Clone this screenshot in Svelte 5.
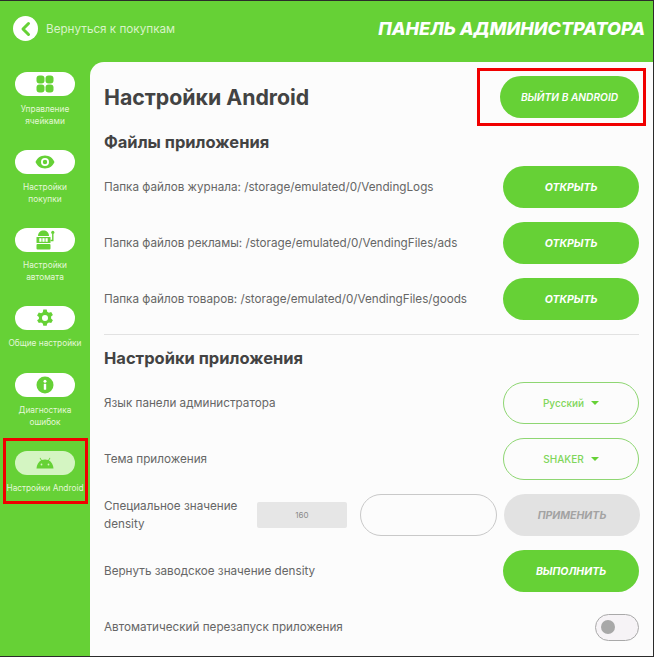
<script lang="ts">
  const fileRows = [
    "Папка файлов журнала: /storage/emulated/0/VendingLogs",
    "Папка файлов рекламы: /storage/emulated/0/VendingFiles/ads",
    "Папка файлов товаров: /storage/emulated/0/VendingFiles/goods",
  ];
  const navItems = [
    { icon: "grid", label: ["Управление", "ячейками"] },
    { icon: "eye", label: ["Настройки", "покупки"] },
    { icon: "slot", label: ["Настройки", "автомата"] },
    { icon: "gear", label: ["Общие настройки"] },
    { icon: "info", label: ["Диагностика", "ошибок"] },
    { icon: "android", label: ["Настройки Android"], active: true },
  ];
</script>

<div class="screen">
  <header class="top">
    <div class="back">
      <span class="back-dot">
        <svg width="14" height="16" viewBox="0 0 14 16"><path d="M9.5 2.5 L4 8 L9.5 13.5" fill="none" stroke="#66d136" stroke-width="3" stroke-linecap="round" stroke-linejoin="round" /></svg>
      </span>
      <span>Вернуться к покупкам</span>
    </div>
    <h1>ПАНЕЛЬ АДМИНИСТРАТОРА</h1>
  </header>

  <div class="body">
    <nav class="side">
      {#each navItems as item}
        <div class="nav-item" class:active={item.active}>
          <span class="pill">
            {#if item.icon === "grid"}
              <svg width="18" height="18" viewBox="0 0 18 18" fill="#66d136"><rect x="0.5" y="0.5" width="8" height="8" rx="3" /><rect x="9.5" y="0.5" width="8" height="8" rx="3" /><rect x="0.5" y="9.5" width="8" height="8" rx="3" /><rect x="9.5" y="9.5" width="8" height="8" rx="3" /></svg>
            {:else if item.icon === "eye"}
              <svg width="20" height="14" viewBox="0 0 20 14"><path fill-rule="evenodd" fill="#66d136" d="M10 0.5C5.5 0.5 2 3.3 0.5 7 2 10.7 5.5 13.5 10 13.5S18 10.7 19.5 7C18 3.3 14.5 0.5 10 0.5ZM10 3a4 4 0 1 1 0 8 4 4 0 0 1 0-8ZM10 4.8a2.2 2.2 0 1 0 0 4.4 2.2 2.2 0 0 0 0-4.4Z" /></svg>
            {:else if item.icon === "slot"}
              <svg width="20" height="20" viewBox="0 0 20 20" fill="#66d136"><path d="M3 6C3 2.5 5.5 0.5 8.5 0.5S14 2.5 14 6Z" /><rect x="1.5" y="7" width="14" height="6" rx="0.5" /><rect x="1.5" y="14" width="14" height="5.5" rx="1" /><rect x="4.3" y="8.2" width="2.2" height="3.6" fill="#fff" /><rect x="7.4" y="8.2" width="2.2" height="3.6" fill="#fff" /><rect x="10.5" y="8.2" width="2.2" height="3.6" fill="#fff" /><path d="M15.5 10.5h2.3V4" fill="none" stroke="#66d136" stroke-width="1.4" /><circle cx="17.8" cy="2.4" r="1.6" /></svg>
            {:else if item.icon === "gear"}
              <svg width="18" height="18" viewBox="0 0 18 18"><path fill-rule="evenodd" fill="#66d136" d="M7.3 0.5h3.4l.5 2.3 1.7 1 2.3-.7 1.7 2.9-1.8 1.6v2l1.8 1.6-1.7 2.9-2.3-.7-1.7 1-.5 2.3H7.3l-.5-2.3-1.700-1-2.300.7-1.700-2.900L2.900 10V8L1.100 6.400l1.700-2.900 2.300.7 1.700-1ZM9 6a3 3 0 1 0 0 6 3 3 0 0 0 0-6Z" /></svg>
            {:else if item.icon === "info"}
              <svg width="18" height="18" viewBox="0 0 18 18"><circle cx="9" cy="9" r="8.500" fill="#66d136" /><rect x="7.800" y="7.800" width="2.400" height="6" rx="0.600" fill="#fff" /><circle cx="9" cy="5.200" r="1.500" fill="#fff" /></svg>
            {:else}
              <svg width="18" height="12" viewBox="0 0 18 12" fill="#66d136"><path d="M0.500 11.500C0.700 7.800 2.400 5 5 3.500L3.600 1.100 4.300 0.700 5.800 3.100C7.800 2.200 10.200 2.200 12.200 3.100L13.700 0.700 14.400 1.100 13 3.500C15.600 5 17.300 7.800 17.500 11.500Z" /><circle cx="5.500" cy="7.500" r="0.900" fill="#d4f5c2" /><circle cx="12.500" cy="7.500" r="0.900" fill="#d4f5c2" /></svg>
            {/if}
          </span>
          <span class="nav-label">
            {#each item.label as line}<span>{line}</span>{/each}
          </span>
        </div>
      {/each}
    </nav>

    <main class="panel">
      <div class="row title-row">
        <h2>Настройки Android</h2>
        <button class="btn exit">ВЫЙТИ В ANDROID</button>
      </div>

      <h3 class="files-title">Файлы приложения</h3>
      {#each fileRows as text}
        <div class="row">
          <span class="label">{text}</span>
          <button class="btn">ОТКРЫТЬ</button>
        </div>
      {/each}

      <hr />

      <h3 class="app-title">Настройки приложения</h3>
      <div class="row">
        <span class="label">Язык панели администратора</span>
        <button class="btn outline">Русский <i class="caret"></i></button>
      </div>
      <div class="row">
        <span class="label">Тема приложения</span>
        <button class="btn outline">SHAKER <i class="caret"></i></button>
      </div>
      <div class="row">
        <span class="label density">Специальное значение density</span>
        <span class="current">160</span>
        <span class="field"></span>
        <button class="btn off">ПРИМЕНИТЬ</button>
      </div>
      <div class="row">
        <span class="label">Вернуть заводское значение density</span>
        <button class="btn">ВЫПОЛНИТЬ</button>
      </div>
      <div class="row">
        <span class="label">Автоматический перезапуск приложения</span>
        <span class="toggle"><i></i></span>
      </div>
    </main>
  </div>

  <div class="mark mark-nav"></div>
  <div class="mark mark-exit"></div>
</div>

<style>
  :global(body) {
    margin: 0;
    background: #66d136;
  }

  .screen {
    position: relative;
    box-sizing: border-box;
    width: 654px;
    height: 657px;
    overflow: hidden;
    display: flex;
    flex-direction: column;
    background: #66d136;
    border-top: 1px solid #2b2b2b;
    border-bottom: 1px solid #2b2b2b;
    border-right: 1px solid #2b2b2b;
    font-family: "Inter", "Open Sans", sans-serif;
    color: #4a4a4a;
  }

  /* ── Top bar ─────────────────────────────────── */
  .top {
    height: 61px;
    flex: none;
    display: flex;
    align-items: center;
    justify-content: space-between;
    padding: 0 8px 6px 13px;
    box-sizing: border-box;
  }

  .back {
    display: flex;
    align-items: center;
    gap: 8px;
    color: #d8f3c8;
    font-size: 11.7px;
  }

  .back-dot {
    width: 25px;
    height: 25px;
    border-radius: 50%;
    background: #fff;
    display: flex;
    align-items: center;
    justify-content: center;
  }

  h1 {
    margin: 0;
    color: #fff;
    font-size: 18px;
    font-weight: 800;
    font-style: italic;
  }

  .body {
    flex: 1;
    display: flex;
    min-height: 0;
  }

  /* ── Side nav ────────────────────────────────── */
  .side {
    width: 90px;
    flex: none;
    display: flex;
    flex-direction: column;
    padding-top: 10px;
    box-sizing: border-box;
  }

  .nav-item {
    height: 78px;
    display: flex;
    flex-direction: column;
    align-items: center;
  }

  .nav-item:nth-child(4) {
    height: 67px;
  }

  .pill {
    width: 60px;
    height: 24px;
    flex: none;
    border-radius: 12px;
    background: #fff;
    display: flex;
    align-items: center;
    justify-content: center;
  }

  .active .pill {
    background: #d4f5c2;
  }

  .nav-label {
    margin-top: 7px;
    display: flex;
    flex-direction: column;
    align-items: center;
    color: #e4f7d8;
    font-size: 8.3px;
    line-height: 12px;
    white-space: nowrap;
  }

  /* ── Main panel ──────────────────────────────── */
  .panel {
    flex: 1;
    background: #fcfcfc;
    border-top-left-radius: 14px;
    padding: 0 14px;
    overflow: hidden;
  }

  .row {
    height: 56px;
    display: flex;
    align-items: center;
    justify-content: space-between;
  }

  .title-row {
    box-sizing: border-box;
    height: 67px;
    padding-top: 2px;
  }

  h2 {
    margin: 0;
    font-size: 21.3px;
    font-weight: 700;
    color: #434343;
  }

  h3 {
    margin: 0;
    height: 26px;
    line-height: 26px;
    font-size: 16.5px;
    font-weight: 700;
    color: #434343;
  }

  .files-title {
    margin-bottom: 4px;
  }

  .app-title {
    margin-bottom: 4px;
  }

  .label {
    font-size: 11.7px;
    color: #666;
    white-space: nowrap;
  }

  .density {
    width: 153px;
    white-space: normal;
    line-height: 18px;
    flex: none;
  }

  .btn {
    box-sizing: border-box;
    width: 136px;
    height: 42px;
    flex: none;
    margin: 0;
    padding: 0;
    border: none;
    border-radius: 21px;
    background: #66d136;
    color: #fff;
    font-family: inherit;
    font-size: 10.5px;
    font-weight: 700;
    font-style: italic;
  }

  .exit {
    width: 139px;
    font-size: 10.2px;
    font-weight: 600;
  }

  .outline {
    background: #fcfcfc;
    border: 1.5px solid #8ed672;
    color: #7fd65a;
    font-size: 10px;
    font-style: normal;
    font-weight: 500;
    display: flex;
    align-items: center;
    justify-content: center;
    gap: 7px;
  }

  .caret {
    width: 0;
    height: 0;
    border-left: 4px solid transparent;
    border-right: 4px solid transparent;
    border-top: 4px solid #66d136;
  }

  .off {
    background: #e2e2e2;
    color: #a3a3a3;
  }

  hr {
    border: none;
    border-top: 1px solid #e2e2e2;
    margin: 7px 0 10px;
  }

  .current {
    width: 90px;
    height: 26px;
    flex: none;
    border-radius: 2px;
    background: #e6e6e6;
    color: #8a8a8a;
    font-size: 8px;
    display: flex;
    align-items: center;
    justify-content: center;
  }

  .field {
    box-sizing: border-box;
    width: 137px;
    height: 42px;
    flex: none;
    margin-left: 13px;
    margin-right: 7px;
    border: 1px solid #c9c9c9;
    border-radius: 21px;
    background: #fcfcfc;
  }

  .toggle {
    box-sizing: border-box;
    width: 44px;
    height: 27px;
    display: flex;
    align-items: center;
    padding-left: 5px;
    border: 1.5px solid #a9a9a9;
    border-radius: 14px;
    background: #f6f3f6;
  }

  .toggle i {
    width: 14px;
    height: 14px;
    border-radius: 50%;
    background: #a8a8a8;
  }

  /* ── Red annotation frames ───────────────────── */
  .mark {
    position: absolute;
    box-sizing: border-box;
    border: 3px solid #f00000;
  }

  .mark-nav {
    left: 3px;
    top: 437px;
    width: 85px;
    height: 66px;
  }

  .mark-exit {
    left: 477px;
    top: 67px;
    width: 169px;
    height: 58px;
  }
</style>
